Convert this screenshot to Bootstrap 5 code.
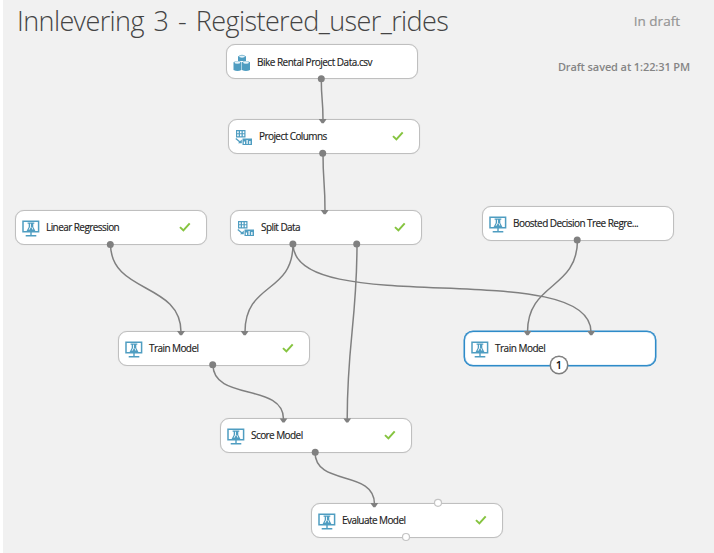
<!DOCTYPE html>
<html lang="en">
<head>
<meta charset="utf-8">
<title>Innlevering 3 - Registered_user_rides</title>
<meta name="viewport" content="width=device-width, initial-scale=1">
<link href="https://cdn.jsdelivr.net/npm/bootstrap@5.3.0/dist/css/bootstrap.min.css" rel="stylesheet">
<style>
body{background:#f1f1f1;font-family:"Open Sans","Noto Sans",sans-serif;border-left:3px solid #fff;height:553px;overflow:hidden}
header{height:90px;padding:1px 24px 0 14px}
h1{font-size:27px;font-weight:300;line-height:40px;letter-spacing:-.6px;word-spacing:3.3px;color:#444}
.state{font-size:13.5px;line-height:20px;color:#959595;margin:10px 10px 0 0;-webkit-text-stroke:.2px #959595}
.saved{font-size:11px;font-weight:600;line-height:16px;color:#858585;margin-top:28px;letter-spacing:-.11px}
.canvas{left:-3px;top:0;width:714px;height:553px}
.node{width:192px;height:35px;border:1px solid #bfbfbf;border-radius:9px;padding:0 15px 0 6px;background:#fff;box-shadow:0 0 1px #ccc}
.node.selected{border-color:#2e8bc9;box-shadow:0 0 0 .5px #2e8bc9,inset 0 0 1px #2e8bc9}
.node svg{flex:none;margin-bottom:1px}
.node svg:first-child{margin:3px 0 0}
.label{font-size:10px;font-weight:500;line-height:16px;color:#1c1c1c;margin:0 0 1px 6px;letter-spacing:-.57px;-webkit-text-stroke:.15px #1c1c1c}
.num{left:550px;top:356px;width:18px;height:18px;border:1px solid #777;box-shadow:0 0 0 .5px #808080;font-size:11px;font-weight:600;line-height:16px;color:#111}
</style>
<script src="https://cdn.jsdelivr.net/npm/bootstrap@5.3.0/dist/js/bootstrap.bundle.min.js"></script>
</head>
<body class="position-relative">
<svg width="0" height="0" class="position-absolute">
<symbol id="lab" viewBox="0 0 18 18"><path d="M1 1.200h15.600v10.600H1z" fill="#fff" stroke="#4f9dc1" stroke-width="1.500"/><path d="M8.300 12h1.400v3.600H8.300zM3.700 15h10.600v1.400H3.700z" fill="#4f9dc1"/><path d="M5.600 2.600h6.700v1.200h-1v3.100l2.100 4.100H4.600l2.100-4.100V3.800H5.600z" fill="#4f9dc1"/><path d="M8 3.800h.9v3.500L7.400 9.800h-.8L8 7.100zM10 6.800l1.300 2.700h-.9L9.500 7.600z" fill="#fff"/></symbol>
<symbol id="data" viewBox="0 0 18 18"><g fill="#4f9dc1"><path d="M5 2.400Q9 -.9 13 2.400V7H5z"/><path d="M.5 8.300Q4.500 5.500 8.400 8.300v7.600Q4.500 18 .5 15.900z"/><path d="M8.900 8.300Q13 5.500 17 8.300v7.600Q13 18 8.900 15.900z"/></g><g fill="#e5f3f9"><ellipse cx="9" cy="2.600" rx="2.900" ry="1.100"/><ellipse cx="4.400" cy="8.500" rx="2.900" ry="1.200"/><ellipse cx="13" cy="8.500" rx="2.900" ry="1.200"/></g></symbol>
<symbol id="table" viewBox="0 0 18 18"><g fill="#4f9dc1"><path d="M1 1h9.500v7.500H1z"/><path d="M7.500 9.500H17V16H7.500z"/><path d="M3 14.300h3.800V10.500z"/></g><path d="M.8 9.500L5.200 13.200" stroke="#4f9dc1" stroke-width="1.300"/><path d="M2.200 2.300h1.500v1.900H2.200zM5 2.300h1.500v1.900H5zM7.800 2.300h1.500v1.900H7.800zM2.200 5.300h1.500v1.900H2.200zM5 5.300h1.500v1.900H5zM7.800 5.300h1.500v1.900H7.800zM8.800 12.500h1.200v2.500H8.800zM11.500 11h1.200v4h-1.200zM14.200 12h1.300v3h-1.300z" fill="#fff"/></symbol>
<symbol id="check" viewBox="0 0 12 10"><path d="M1 5.100L4.400 8.400L10.700 1.300" fill="none" stroke="#86c440" stroke-width="2"/></symbol>
<symbol id="arrow" viewBox="0 0 8 5"><path d="M0 0h8L5 4.300H3z" fill="#808080"/></symbol>
</svg>
<header class="d-flex justify-content-between">
<h1 class="m-0 text-nowrap">Innlevering 3 - Registered_user_rides</h1>
<div class="text-end text-nowrap"><div class="state">In draft</div><div class="saved">Draft saved at 1:22:31 PM</div></div>
</header>
<main class="canvas position-absolute">
<div class="node position-absolute d-flex align-items-center" style="left:226px;top:44px"><svg width="18" height="18"><use href="#data"/></svg><span class="label text-nowrap mb-0" style="letter-spacing:-.5px">Bike Rental Project Data.csv</span></div>
<div class="node position-absolute d-flex align-items-center" style="left:228px;top:119px"><svg width="18" height="18"><use href="#table"/></svg><span class="label text-nowrap">Project Columns</span><svg class="ms-auto" width="12" height="10"><use href="#check"/></svg></div>
<div class="node position-absolute d-flex align-items-center" style="left:15px;top:210px"><svg width="18" height="18"><use href="#lab"/></svg><span class="label text-nowrap">Linear Regression</span><svg class="ms-auto" width="12" height="10"><use href="#check"/></svg></div>
<div class="node position-absolute d-flex align-items-center" style="left:230px;top:210px"><svg width="18" height="18"><use href="#table"/></svg><span class="label text-nowrap">Split Data</span><svg class="ms-auto" width="12" height="10"><use href="#check"/></svg></div>
<div class="node position-absolute d-flex align-items-center" style="left:482px;top:206px"><svg width="18" height="18"><use href="#lab"/></svg><span class="label text-nowrap" style="letter-spacing:-.55px">Boosted Decision Tree Regre...</span></div>
<div class="node position-absolute d-flex align-items-center" style="left:118px;top:331px"><svg width="18" height="18"><use href="#lab"/></svg><span class="label text-nowrap">Train Model</span><svg class="ms-auto" width="12" height="10"><use href="#check"/></svg></div>
<div class="node selected position-absolute d-flex align-items-center" style="left:464px;top:331px"><svg width="18" height="18"><use href="#lab"/></svg><span class="label text-nowrap" style="letter-spacing:-.5px">Train Model</span></div>
<div class="node position-absolute d-flex align-items-center" style="left:220px;top:418px"><svg width="18" height="18"><use href="#lab"/></svg><span class="label text-nowrap">Score Model</span><svg class="ms-auto" width="12" height="10"><use href="#check"/></svg></div>
<div class="node position-absolute d-flex align-items-center" style="left:311px;top:503px"><svg width="18" height="18"><use href="#lab"/></svg><span class="label text-nowrap">Evaluate Model</span><svg class="ms-auto" width="12" height="10"><use href="#check"/></svg></div>
<svg class="position-absolute top-0 start-0" width="714" height="553">
<g fill="none" stroke="#808080" stroke-width="1.500">
<path d="M321.300 79C321.300 101 323 98 323 120"/><path d="M323 153C323 184 325 180 325 211"/>
<path d="M110.500 244C110.500 294 181 282 181 332"/><path d="M293 244C293 294 245 282 245 332"/>
<path d="M293 244C293 320 591 256 591 332"/><path d="M357 244C357 320 347.200 343 347.200 419"/>
<path d="M577.500 240C577.500 290 527.500 282 527.500 332"/><path d="M213 365C213 401 283.500 383 283.500 419"/>
<path d="M315 452C315 487 374.500 469 374.500 504"/></g>
<g fill="#808080"><circle cx="321.300" cy="78.700" r="3.500"/><circle cx="322.700" cy="153.300" r="3.500"/><circle cx="110.300" cy="244.600" r="3.500"/><circle cx="292.900" cy="244" r="3.500"/><circle cx="356.700" cy="244" r="3.500"/><circle cx="577.200" cy="240" r="3.500"/><circle cx="212.700" cy="364.700" r="3.500"/><circle cx="315.200" cy="452.300" r="3.500"/></g>
<g><use href="#arrow" x="318.700" y="119" width="8" height="5"/><use href="#arrow" x="320.700" y="210" width="8" height="5"/><use href="#arrow" x="177" y="331" width="8" height="5"/><use href="#arrow" x="240.700" y="331" width="8" height="5"/><use href="#arrow" x="523.500" y="331" width="8" height="5"/><use href="#arrow" x="587.200" y="331" width="8" height="5"/><use href="#arrow" x="279.500" y="418.300" width="8" height="5"/><use href="#arrow" x="343.200" y="418.300" width="8" height="5"/><use href="#arrow" x="370.300" y="503" width="8" height="5"/></g>
<g fill="#fff" stroke="#c4c4c4" stroke-width="1.200"><circle cx="438" cy="502.800" r="3.500"/><circle cx="406" cy="537" r="3.500"/></g>
</svg>
<div class="num position-absolute rounded-circle bg-white text-center">1</div>
</main>
</body>
</html>
